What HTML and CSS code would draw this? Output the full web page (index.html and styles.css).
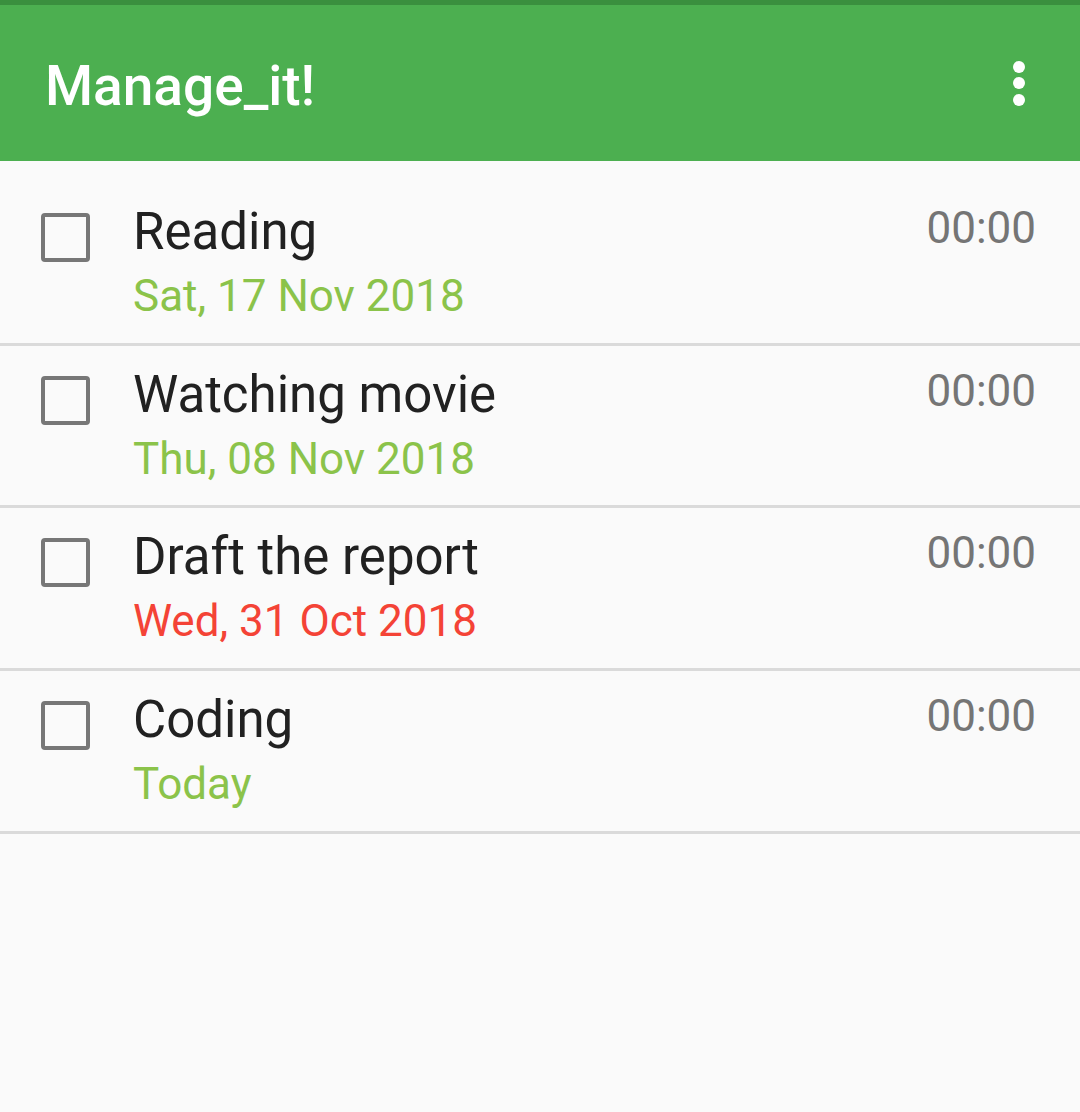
FILE: index.html
```html
<!DOCTYPE html>
<html>
<head>
<meta charset="utf-8">
<link rel="stylesheet" href="styles.css">
</head>
<body>
<div class="statusbar"></div>
<header class="toolbar">
  <div class="app-title">Manage_it!</div>
  <div class="menu"><span></span><span></span><span></span></div>
</header>
<ul class="list">
  <li class="row">
    <div class="check"></div>
    <div class="texts">
      <div class="title">Reading</div>
      <div class="date ok">Sat, 17 Nov 2018</div>
    </div>
    <div class="time">00:00</div>
  </li>
  <li class="row">
    <div class="check"></div>
    <div class="texts">
      <div class="title">Watching movie</div>
      <div class="date ok">Thu, 08 Nov 2018</div>
    </div>
    <div class="time">00:00</div>
  </li>
  <li class="row">
    <div class="check"></div>
    <div class="texts">
      <div class="title">Draft the report</div>
      <div class="date late">Wed, 31 Oct 2018</div>
    </div>
    <div class="time">00:00</div>
  </li>
  <li class="row">
    <div class="check"></div>
    <div class="texts">
      <div class="title">Coding</div>
      <div class="date ok">Today</div>
    </div>
    <div class="time">00:00</div>
  </li>
</ul>
</body>
</html>
```

FILE: styles.css
```css
* { box-sizing: border-box; }
html, body {
  margin: 0;
  padding: 0;
  background: #fafafa;
  font-family: Roboto, "Noto Sans", sans-serif;
  width: 1080px;
  height: 1112px;
  overflow: hidden;
}
.statusbar {
  height: 5px;
  background: #3a8f3e;
}
.toolbar {
  height: 156px;
  background: #4caf50;
  display: flex;
  align-items: center;
  justify-content: space-between;
  padding: 0 55px 0 45px;
}
.app-title {
  color: #fff;
  font-size: 55px;
  font-weight: 500;
  line-height: 66px;
  margin-top: 6px;
}
.menu {
  display: flex;
  flex-direction: column;
  gap: 4.5px;
}
.menu span {
  width: 12px;
  height: 12px;
  border-radius: 50%;
  background: #fff;
}
.list {
  list-style: none;
  margin: 0;
  padding: 22px 0 0 0;
}
.row {
  display: flex;
  align-items: flex-start;
  height: 162.7px;
  border-bottom: 3px solid #dadada;
  padding: 0 44px 0 41px;
}
.check {
  width: 49px;
  height: 49px;
  margin-top: 30px;
  border: 4.5px solid #777;
  border-radius: 4px;
  flex: none;
}
.texts {
  flex: 1;
  margin-left: 43px;
  padding-top: 21px;
}
.title {
  font-size: 51px;
  line-height: 56px;
  color: #212121;
}
.date {
  font-size: 44px;
  line-height: 52px;
  margin-top: 10px;
}
.date.ok { color: #8bc34a; }
.date.late { color: #f44336; }
.time {
  font-size: 44px;
  line-height: 52px;
  color: #757575;
  padding-top: 19px;
}
```
